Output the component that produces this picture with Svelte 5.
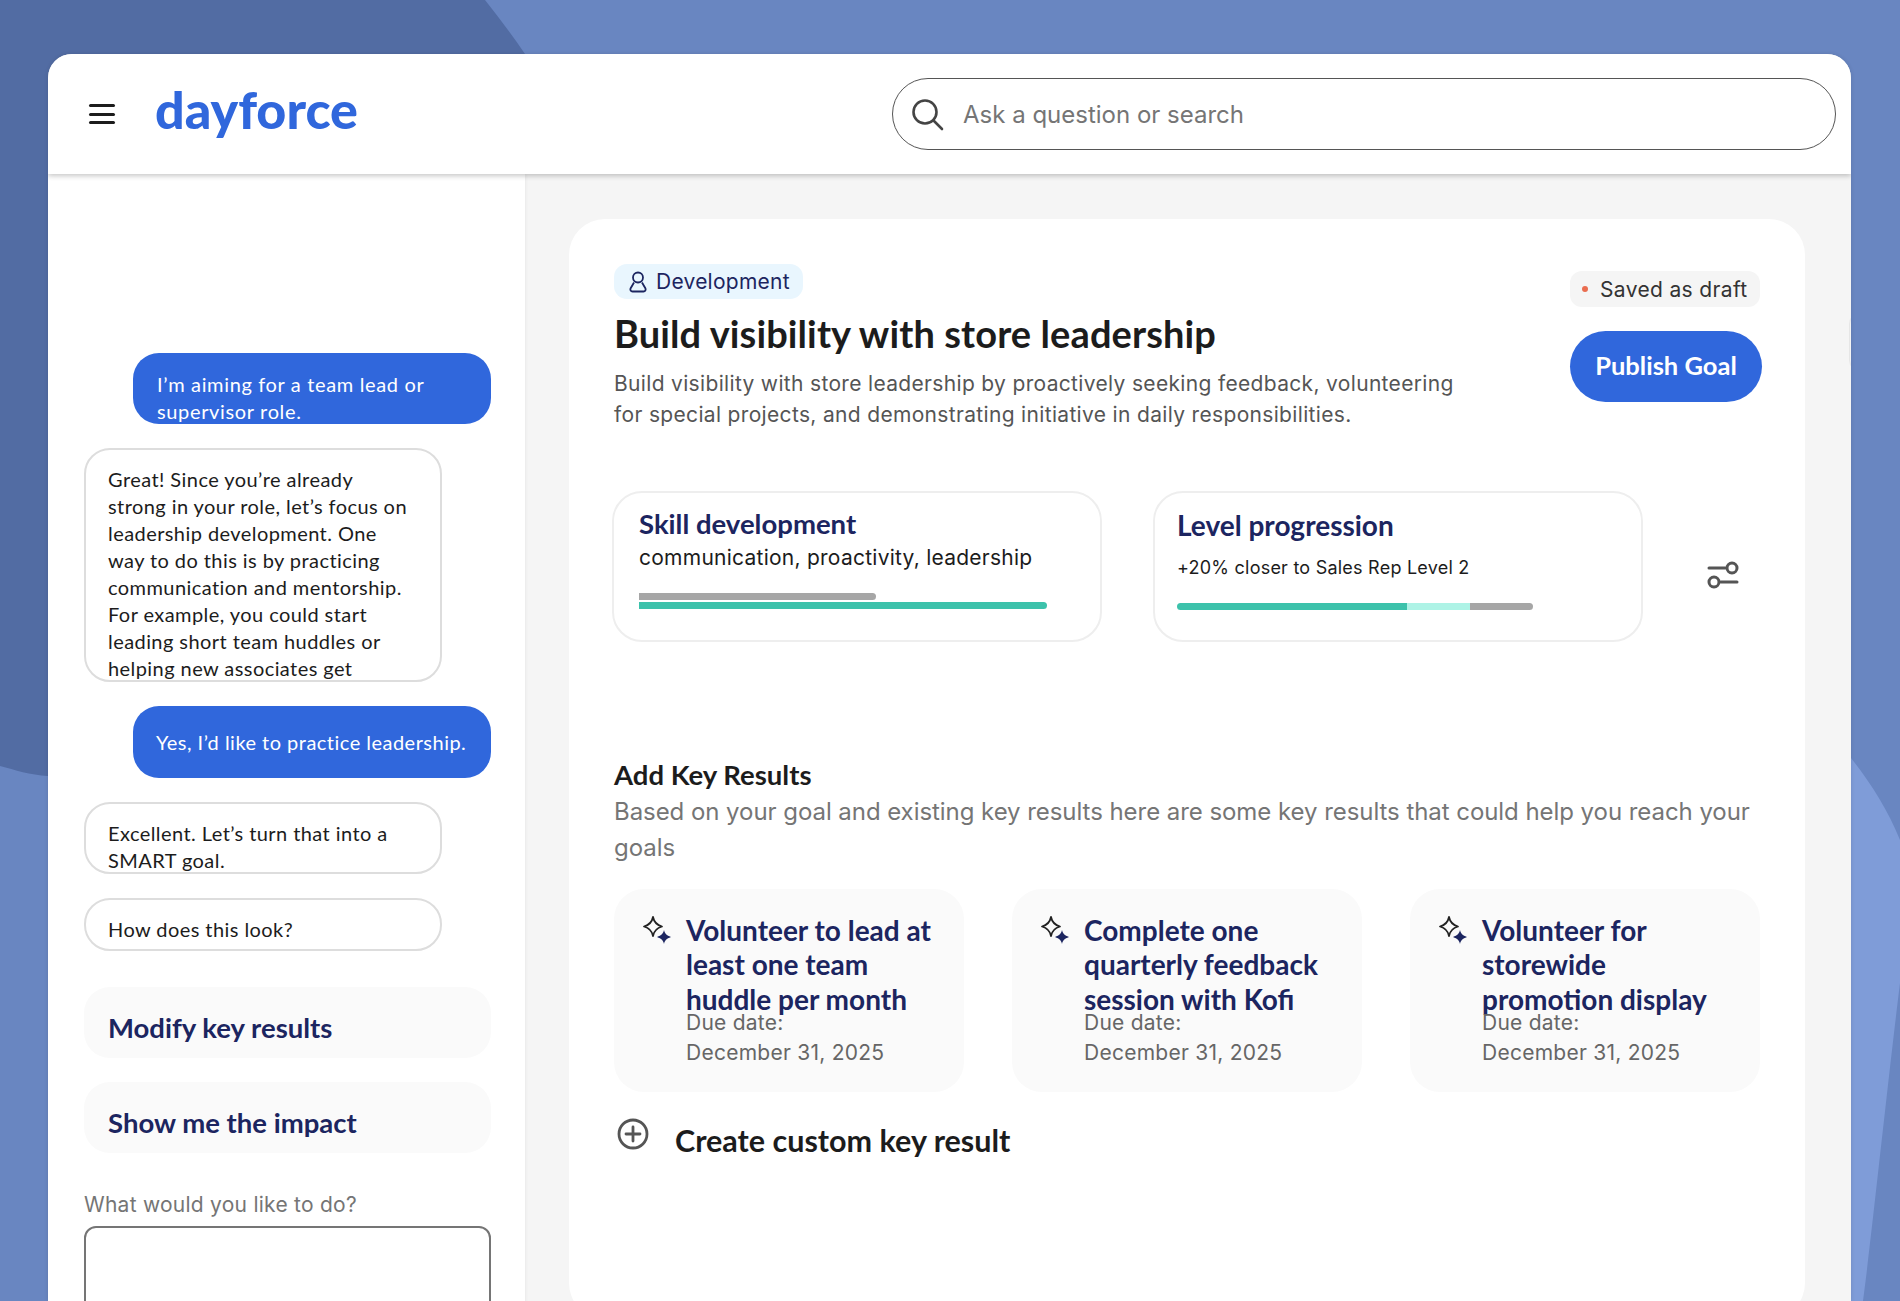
<script>
  const messages = [
    { from: "user", text: "I’m aiming for a team lead or supervisor role.", height: 71 },
    {
      from: "bot",
      text: "Great! Since you’re already strong in your role, let’s focus on leadership development. One way to do this is by practicing communication and mentorship. For example, you could start leading short team huddles or helping new associates get comfortable in their roles.",
      height: 234
    },
    { from: "user", text: "Yes, I’d like to practice leadership.", height: 72, single: true },
    { from: "bot", text: "Excellent. Let’s turn that into a SMART goal.", height: 72 },
    { from: "bot", text: "How does this look?", height: 53 }
  ];

  const options = ["Modify key results", "Show me the impact"];

  const keyResults = [
    "Volunteer to lead at least one team huddle per month",
    "Complete one quarterly feedback session with Kofi",
    "Volunteer for storewide promotion display"
  ];
</script>

<div class="page">
  <svg class="backdrop" viewBox="0 0 1900 1301" aria-hidden="true">
    <path fill="#526ca3" d="M0 0H485C499 18 513 36 525 54C680 290 500 780 48 776C30 775 15 770 0 766Z" />
    <path fill="#7f9cd8" d="M1851 758C1870 782 1888 810 1900 840V983C1888 1080 1870 1250 1863 1301H1600V700Z" />
  </svg>

  <div class="frame">
    <header class="topbar">
      <button class="menu" aria-label="Menu">
        <span></span><span></span><span></span>
      </button>
      <div class="logo">dayforce</div>
      <div class="search">
        <svg width="34" height="34" viewBox="0 0 34 34" fill="none" stroke="#444" stroke-width="2.6" stroke-linecap="round">
          <circle cx="15" cy="15" r="11.5" />
          <path d="M23.5 23.5 32 32" />
        </svg>
        <span>Ask a question or search</span>
      </div>
    </header>

    <div class="body">
      <aside class="sidebar">
        <div class="chat">
          {#each messages as m}
            <div class="bubble {m.from}" class:single={m.single} style="height: {m.height}px">{m.text}</div>
          {/each}
        </div>

        <div class="options">
          {#each options as o}
            <div class="option">{o}</div>
          {/each}
        </div>

        <div class="prompt">What would you like to do?</div>
        <div class="textbox"></div>
      </aside>

      <main class="content">
        <section class="card">
          <div class="goal">
            <div class="goal-left">
              <div class="chip">
                <svg width="20" height="22" viewBox="0 0 20 22" fill="none" stroke="#1c2560" stroke-width="1.8" stroke-linejoin="round">
                  <circle cx="10" cy="6.5" r="5" />
                  <path d="M6 11.5 2.5 17.5C2 19 2.8 20.5 4.5 20.5H15.5C17.2 20.5 18 19 17.5 17.5L14 11.5" />
                </svg>
                Development
              </div>
              <h1>Build visibility with store leadership</h1>
              <p class="desc">Build visibility with store leadership by proactively seeking feedback, volunteering for special projects, and demonstrating initiative in daily responsibilities.</p>
            </div>
            <div class="goal-right">
              <div class="saved"><i></i>Saved as draft</div>
              <button class="publish">Publish Goal</button>
            </div>
          </div>

          <div class="metrics">
            <div class="metric">
              <h3 class="skill">Skill development</h3>
              <div class="metric-sub">communication, proactivity, leadership</div>
              <div class="bar grey" style="width: 237px"></div>
              <div class="bar teal" style="width: 408px"></div>
            </div>
            <div class="metric level">
              <h3>Level progression</h3>
              <div class="metric-sub small">+20% closer to Sales Rep Level 2</div>
              <div class="track">
                <div class="seg teal" style="width: 230px"></div>
                <div class="seg mint" style="width: 63px"></div>
                <div class="seg grey" style="width: 63px"></div>
              </div>
            </div>
            <svg class="tune" width="32" height="28" viewBox="0 0 32 28" fill="none" stroke="#555" stroke-width="3" stroke-linecap="round">
              <path d="M2 7H18" />
              <circle cx="25" cy="7" r="5" />
              <circle cx="7" cy="21" r="5" />
              <path d="M14 21H30" />
            </svg>
          </div>

          <h2>Add Key Results</h2>
          <p class="lead">Based on your goal and existing key results here are some key results that could help you reach your goals</p>

          <div class="results">
            {#each keyResults as title}
              <div class="result">
                <svg class="spark" width="30" height="30" viewBox="0 0 30 30">
                  <path fill="none" stroke="#222" stroke-width="1.8" stroke-linejoin="round" d="M11 2C12 7 14.500 10 20 11.500C14.500 13 12 16 11 21C10 16 7.500 13 2 11.500C7.500 10 10 7 11 2Z" />
                  <path fill="#1c2560" d="M22 15C22.700 18.500 24.500 20.300 29 22C24.500 23.700 22.700 25.500 22 29C21.300 25.500 19.500 23.700 15 22C19.500 20.300 21.300 18.500 22 15Z" />
                </svg>
                <div class="result-text">
                  <h4>{title}</h4>
                  <div class="due">Due date:<br />December 31, 2025</div>
                </div>
              </div>
            {/each}
          </div>

          <div class="create">
            <svg width="32" height="32" viewBox="0 0 32 32" fill="none" stroke="#555" stroke-width="2.8" stroke-linecap="round">
              <circle cx="16" cy="16" r="14" />
              <path d="M16 9V23M9 16H23" />
            </svg>
            <span>Create custom key result</span>
          </div>
        </section>
        <div class="peek"></div>
      </main>
    </div>
  </div>
</div>

<style>
  :global(body) {
    margin: 0;
    background: #6986c1;
  }

  .page {
    position: relative;
    height: 1301px;
    padding: 54px 49px 0 48px;
    box-sizing: border-box;
    overflow: hidden;
    font-family: Inter, sans-serif;
  }

  .backdrop {
    position: absolute;
    inset: 0;
    width: 1900px;
    height: 1301px;
  }

  .frame {
    position: relative;
    height: 1247px;
    background: #f5f5f5;
    border-radius: 24px 24px 0 0;
    overflow: hidden;
    box-shadow: 0 0 4px rgba(0, 0, 0, 0.12);
  }

  .topbar {
    position: relative;
    z-index: 2;
    height: 120px;
    background: #fff;
    box-shadow: 0 2px 5px rgba(0, 0, 0, 0.22);
    display: flex;
    align-items: center;
    padding: 0 15px 0 41px;
    box-sizing: border-box;
  }

  .menu {
    width: 26px;
    height: 20px;
    padding: 0;
    border: 0;
    background: none;
    display: flex;
    flex-direction: column;
    justify-content: space-between;
  }

  .menu span {
    height: 3px;
    border-radius: 2px;
    background: #1c1c1c;
  }

  .logo {
    margin-left: 40px;
    margin-top: -10px;
    width: 204px;
    font-family: Lato, sans-serif;
    font-weight: 900;
    font-size: 52px;
    line-height: 60px;
    color: #3067dc;
  }

  .search {
    margin-left: auto;
    width: 944px;
    height: 72px;
    box-sizing: border-box;
    border: 1.5px solid #555;
    border-radius: 36px;
    display: flex;
    align-items: center;
    gap: 19px;
    padding-left: 17px;
    font-size: 24px;
    color: #757575;
  }

  .body {
    display: grid;
    grid-template-columns: 477px 1fr;
    height: 1127px;
  }

  .sidebar {
    background: #fff;
    padding: 179px 34px 0 36px;
    box-shadow: 1px 0 3px rgba(0, 0, 0, 0.05);
  }

  .chat {
    display: flex;
    flex-direction: column;
    gap: 24px;
  }

  .bubble {
    box-sizing: border-box;
    overflow: hidden;
    width: 358px;
    border-radius: 26px;
    padding: 18px 24px 0;
    font-family: Lato, sans-serif;
    font-size: 20px;
    line-height: 27px;
    letter-spacing: 0.43px;
    color: #1c1c1c;
  }

  .bubble.user {
    align-self: flex-end;
    background: #3067dc;
    color: #fff;
    letter-spacing: 0.65px;
  }

  .bubble.bot {
    border: 2px solid #ddd;
    padding-left: 22px;
    padding-top: 16px;
  }

  .bubble.user.single {
    padding: 23px 10px 0 23px;
    letter-spacing: 0.48px;
  }

  .options {
    display: flex;
    flex-direction: column;
    gap: 24px;
    margin-top: 36px;
  }

  .option {
    height: 71px;
    box-sizing: border-box;
    padding: 23px 24px 0;
    border-radius: 26px;
    background: #fafafa;
    font-family: Lato, sans-serif;
    font-weight: 700;
    font-size: 27.5px;
    line-height: 36px;
    color: #1c2560;
  }

  .prompt {
    margin-top: 38px;
    font-size: 21px;
    line-height: 28px;
    letter-spacing: 0.25px;
    color: #757575;
  }

  .textbox {
    margin-top: 7px;
    height: 120px;
    border: 2px solid #757575;
    border-radius: 12px;
    box-sizing: border-box;
  }

  .content {
    position: relative;
    padding: 45px 46px 0 44px;
    min-width: 0;
  }

  .peek {
    position: absolute;
    right: -34px;
    top: 138px;
    width: 34px;
    height: 58px;
    border: 1px solid #e6e6e6;
    border-radius: 12px;
  }

  .card {
    height: 1100px;
    background: #fff;
    border-radius: 36px;
    padding: 45px 45px 0;
    box-sizing: border-box;
  }

  .goal {
    display: flex;
    justify-content: space-between;
  }

  .goal-left {
    width: 850px;
  }

  .chip {
    display: inline-flex;
    align-items: center;
    gap: 8px;
    height: 35px;
    padding: 0 13px 0 14px;
    border-radius: 13px;
    background: #e9f6fe;
    font-size: 21px;
    letter-spacing: 0.25px;
    color: #1c2560;
  }

  h1 {
    margin: 12px 0 0;
    font-family: Lato, sans-serif;
    font-weight: 700;
    font-size: 38px;
    line-height: 44px;
    letter-spacing: 0.1px;
    color: #1c1c1c;
  }

  .desc {
    margin: 14px 0 0;
    font-size: 21px;
    line-height: 30.500px;
    letter-spacing: 0.33px;
    color: #555;
  }

  .goal-right {
    width: 192px;
    margin-top: 7px;
    margin-right: -2px;
  }

  .saved {
    width: 190px;
    height: 36px;
    box-sizing: border-box;
    display: flex;
    align-items: center;
    padding-left: 12px;
    border-radius: 12px;
    background: #f5f5f5;
    font-size: 21px;
    letter-spacing: 0.35px;
    color: #333;
  }

  .saved i {
    width: 6px;
    height: 6px;
    border-radius: 50%;
    background: #ea6d50;
    margin-right: 12px;
  }

  .publish {
    display: block;
    margin-top: 24px;
    width: 192px;
    height: 71px;
    padding: 0 0 3px;
    border: 0;
    border-radius: 36px;
    background: #3067dc;
    color: #fff;
    font-family: Lato, sans-serif;
    font-weight: 700;
    font-size: 25.5px;
  }

  .metrics {
    display: flex;
    align-items: flex-start;
    gap: 51px;
    margin: 60.500px 0 0 -2px;
  }

  .metric {
    width: 490px;
    height: 151px;
    box-sizing: border-box;
    border: 2px solid #eee;
    border-radius: 30px;
    padding: 15px 25px 0;
  }

  .metric.level {
    padding: 14px 25px 0 22px;
  }

  h3 {
    margin: 0;
    font-family: Lato, sans-serif;
    font-weight: 700;
    font-size: 28px;
    line-height: 36px;
    color: #1c2560;
  }

  h3.skill {
    font-size: 27.5px;
    margin-top: -2px;
    margin-bottom: 2px;
  }

  .metric-sub {
    font-size: 21px;
    line-height: 28px;
    letter-spacing: 0.25px;
    color: #1c1c1c;
  }

  .metric-sub.small {
    margin-top: 12px;
    font-size: 18px;
    line-height: 26px;
    letter-spacing: 0.23px;
  }

  .bar {
    height: 7px;
    border-radius: 0 4px 4px 0;
  }

  .bar.grey {
    margin-top: 21px;
    background: #a6a6a6;
  }

  .bar.teal {
    margin-top: 2px;
    background: #3cc2ab;
  }

  .track {
    display: flex;
    width: 356px;
    height: 7px;
    margin-top: 22px;
    border-radius: 4px;
    overflow: hidden;
  }

  .seg.teal {
    background: #3cc2ab;
  }

  .seg.mint {
    background: #aef3e6;
  }

  .seg.grey {
    background: #a6a6a6;
  }

  .tune {
    margin: 70px 0 0 13px;
  }

  h2 {
    margin: 117px 0 0;
    font-family: Lato, sans-serif;
    font-weight: 700;
    font-size: 27.5px;
    line-height: 32px;
    color: #1c1c1c;
  }

  .lead {
    margin: 3px 0 0;
    font-size: 24px;
    line-height: 36px;
    letter-spacing: -0.055px;
    color: #757575;
  }

  .results {
    display: grid;
    grid-template-columns: repeat(3, 350px);
    gap: 48px;
    margin-top: 23px;
  }

  .result {
    height: 203px;
    box-sizing: border-box;
    border-radius: 30px;
    background: #fafafa;
    display: flex;
    gap: 14px;
    padding: 24px 20px 0 28px;
  }

  .spark {
    flex: none;
    margin-top: 2px;
  }

  h4 {
    margin: 0;
    height: 95px;
    font-family: Lato, sans-serif;
    font-weight: 700;
    font-size: 28px;
    line-height: 34.500px;
    color: #1c2560;
  }

  .due {
    font-size: 21px;
    line-height: 30px;
    letter-spacing: 0.25px;
    color: #666;
  }

  .create {
    display: flex;
    gap: 26px;
    align-items: flex-start;
    margin: 26px 0 0 3px;
  }

  .create span {
    margin-top: 4px;
    font-family: Lato, sans-serif;
    font-weight: 700;
    font-size: 30.5px;
    line-height: 36px;
    color: #1c1c1c;
  }
</style>
